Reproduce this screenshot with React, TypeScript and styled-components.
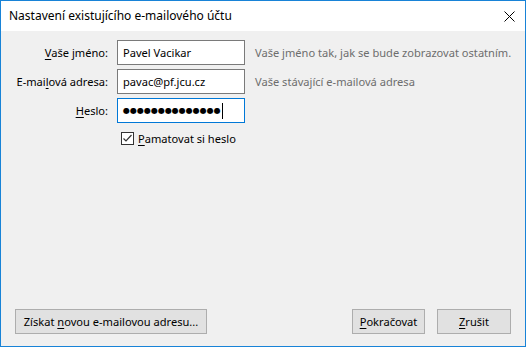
import React from 'react';
import styled, { createGlobalStyle } from 'styled-components';

const Global = createGlobalStyle`
  html, body { margin: 0; padding: 0; background: #fff; }
  body { font-family: "Noto Sans", "Segoe UI", sans-serif; font-size: 11.1px; color: #000; }
`;

const Window = styled.div`
  box-sizing: border-box;
  width: 526px;
  height: 347px;
  border: 1px solid #1883d7;
  display: flex;
  flex-direction: column;
  background: #f0f0f0;
`;

const TitleBar = styled.div`
  height: 30px;
  background: #fff;
  display: flex;
  align-items: center;
  justify-content: space-between;
  padding: 0 10px 0 8px;
`;

const Title = styled.span`
  font-size: 12px;
  line-height: 30px;
`;

const Body = styled.div`
  flex: 1;
  display: flex;
  flex-direction: column;
  justify-content: space-between;
  padding: 9px 14px 12px 14px;
`;

const Form = styled.div`
  display: grid;
  grid-template-columns: 93px 128px 1fr;
  column-gap: 9px;
  row-gap: 4px;
  align-items: center;
`;

const Label = styled.label`
  justify-self: end;
  white-space: nowrap;
`;

const Key = styled.u`
  text-underline-offset: 2px;
`;

const Field = styled.div<{ $focused?: boolean }>`
  box-sizing: border-box;
  height: 25px;
  background: #fff;
  border: 1px solid ${(p) => (p.$focused ? '#0078d7' : '#7a7a7a')};
  padding: 0 5px;
  display: flex;
  align-items: center;
  white-space: nowrap;
  overflow: hidden;
`;

const Dots = styled.span`
  font-family: "DejaVu Sans", sans-serif;
  font-size: 8px;
  letter-spacing: 0;
`;

const Caret = styled.span`
  display: inline-block;
  width: 1px;
  height: 16px;
  background: #000;
  margin-left: 1px;
`;

const Hint = styled.span`
  color: #6d6d6d;
  white-space: nowrap;
  padding-left: 1px;
`;

const CheckRow = styled.label`
  grid-column: 2 / 4;
  display: flex;
  align-items: center;
  gap: 4px;
  margin: 4px 0 0 4px;
`;

const Box = styled.span`
  box-sizing: border-box;
  width: 13px;
  height: 13px;
  border: 1px solid #333;
  background: #fff;
  display: flex;
  align-items: center;
  justify-content: center;
`;

const Footer = styled.div`
  display: flex;
  align-items: center;
  gap: 12px;
`;

const Button = styled.button<{ $width: number }>`
  box-sizing: border-box;
  width: ${(p) => p.$width}px;
  height: 25px;
  background: #e1e1e1;
  border: 1px solid #adadad;
  font: inherit;
  color: #000;
  padding: 0;
  &:first-child { margin-right: auto; }
`;

const App: React.FC = () => (
  <>
    <Global />
    <Window>
      <TitleBar>
        <Title>Nastavení existujícího e-mailového účtu</Title>
        <svg width="11" height="11" viewBox="0 0 11 11">
          <path d="M0.5 0.5 L10.5 10.5 M10.5 0.5 L0.5 10.5" stroke="#000" strokeWidth="1" />
        </svg>
      </TitleBar>
      <Body>
        <Form>
          <Label><Key>V</Key>aše jméno:</Label>
          <Field>Pavel Vacikar</Field>
          <Hint>Vaše jméno tak, jak se bude zobrazovat ostatním.</Hint>

          <Label>E-mai<Key>l</Key>ová adresa:</Label>
          <Field>pavac@pf.jcu.cz</Field>
          <Hint>Vaše stávající e-mailová adresa</Hint>

          <Label><Key>H</Key>eslo:</Label>
          <Field $focused>
            <Dots>{'●'.repeat(14)}</Dots>
            <Caret />
          </Field>
          <span />

          <CheckRow>
            <Box>
              <svg width="11" height="11" viewBox="0 0 11 11">
                <path d="M1.5 5.5 L4 8 L9.5 2" stroke="#333" strokeWidth="1.2" fill="none" />
              </svg>
            </Box>
            <span><Key>P</Key>amatovat si heslo</span>
          </CheckRow>
        </Form>
        <Footer>
          <Button $width={192}>Získat <Key>n</Key>ovou e-mailovou adresu...</Button>
          <Button $width={73}><Key>P</Key>okračovat</Button>
          <Button $width={74}><Key>Z</Key>rušit</Button>
        </Footer>
      </Body>
    </Window>
  </>
);

export default App;
